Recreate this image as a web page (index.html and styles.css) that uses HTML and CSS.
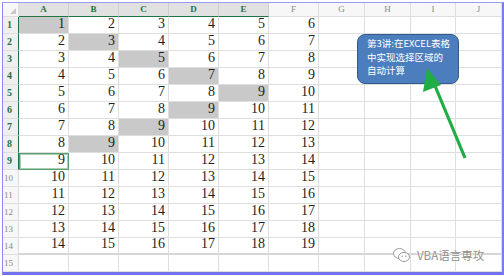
FILE: index.html
```html
<!DOCTYPE html>
<html lang="zh-CN">
<head>
    <meta charset="UTF-8">
    <title>EXCEL 选择区域</title>
    <link rel="stylesheet" href="styles.css">
</head>
<body>

<div class="sheet">
    <div class="grid" id="grid"></div>

    <div class="callout">第3讲:在EXCEL表格<br>中实现选择区域的<br>自动计算</div>

    <svg class="arrow" width="499" height="270" viewBox="0 0 499 270">
        <line x1="430" y1="78" x2="462" y2="155" stroke="#21ad45" stroke-width="3.2"/>
        <polygon points="424,65 438,82 420,89" fill="#21ad45"/>
    </svg>

    <div class="watermark">
        <svg class="wx" width="20" height="16" viewBox="0 0 20 16">
            <ellipse cx="7.5" cy="6.5" rx="6" ry="5" fill="#fff" stroke="#9a9a9a" stroke-width="1"/>
            <ellipse cx="12" cy="10" rx="5.5" ry="4.5" fill="#fff" stroke="#9a9a9a" stroke-width="1"/>
            <circle cx="10.2" cy="9.2" r="0.8" fill="#9a9a9a"/>
            <circle cx="13.8" cy="9.2" r="0.8" fill="#9a9a9a"/>
        </svg>
        <span>VBA语言専攻</span>
    </div>
</div>

<script>
    const cols = ['A', 'B', 'C', 'D', 'E', 'F', 'G', 'H', 'I', 'J'];
    // 灰色の選択セル (行, 列)
    const marked = ['1,0', '2,1', '3,2', '4,3', '5,4', '6,3', '7,2', '8,1'];
    const grid = document.getElementById('grid');

    function addCell(cls, text) {
        const cell = document.createElement('div');
        cell.className = cls;
        cell.textContent = text;
        grid.appendChild(cell);
    }

    addCell('corner', '');
    cols.forEach((c, i) => {
        addCell(i < 5 ? 'col-head sel' : 'col-head', c);
    });

    for (let r = 1; r <= 15; r++) {
        addCell(r <= 9 ? 'row-head sel' : 'row-head', r);
        for (let c = 0; c < 10; c++) {
            let cls = 'cell';
            let text = '';
            if (r <= 14 && c < 6) text = r + c;
            if (marked.includes(r + ',' + c)) cls += ' marked';
            if (r === 9 && c === 0) cls += ' active';
            if (r === 14) cls += ' last';
            addCell(cls, text);
        }
    }
</script>

</body>
</html>
```

FILE: styles.css
```css
body {
    margin: 0;
    background: #fff;
    font-family: 'Liberation Serif', serif;
}
.sheet {
    position: relative;
    width: 499px;
    margin: 2px 0 0 2px;
    border-left: 1px solid #8a8af0;
    border-top: 1px solid #9a9af2;
    border-right: 2px solid #7c7cee;
    border-bottom: 3px solid #7272ec;
    background: #fff;
}
.grid {
    display: grid;
    grid-template-columns: 16px 50px 50px 50px 50px 50px 50px 46px 46px 45px 46px;
    grid-template-rows: 14px repeat(15, 17px);
}
.grid > div {
    box-sizing: border-box;
    border-right: 1px solid #dedede;
    border-bottom: 1px solid #dedede;
}
.corner {
    position: relative;
    background: #f7f7f7;
}
.corner::after {
    content: '';
    position: absolute;
    right: 2px;
    bottom: 2px;
    border-left: 6px solid transparent;
    border-bottom: 6px solid #c8c8c8;
}
.col-head {
    background: #f7f7f7;
    color: #8a8a8a;
    font-size: 9px;
    line-height: 13px;
    text-align: center;
}
.col-head.sel {
    background: #e1e1e1;
    color: #1f7244;
    font-weight: bold;
    border-right-color: #cfcfcf;
}
.grid > .col-head.sel {
    border-bottom: 1px solid #217346;
}
.row-head {
    background: #f7f7f7;
    color: #8a8a8a;
    font-size: 9px;
    line-height: 16px;
    padding-left: 1px;
}
.row-head.sel {
    background: #efefef;
    color: #1f7244;
    font-weight: bold;
    font-size: 10px;
    padding-left: 4px;
}
.grid > .row-head.sel {
    border-right: 1px solid #217346;
}
.cell {
    display: flex;
    justify-content: flex-end;
    align-items: flex-end;
    padding: 0 3px 2px 0;
    font-size: 14px;
    line-height: 14px;
    color: #1e1e1e;
}
.cell.marked {
    background: #c9c9c9;
}
.grid > .cell.last {
    border-bottom: 2px solid #d6d6d6;
}
.grid > .cell.active {
    border: 1px solid #5d9d73;
    box-shadow: inset 0 0 0 1px #a9cfb5;
}
.callout {
    position: absolute;
    left: 354px;
    top: 31px;
    width: 102px;
    height: 50px;
    box-sizing: border-box;
    padding: 2px 4px 0 9px;
    border: 1px solid #35598a;
    border-radius: 8px;
    background: #4c7ebd;
    color: #fff;
    font-family: 'Noto Sans CJK SC', sans-serif;
    font-size: 9.5px;
    line-height: 13.5px;
}
.arrow {
    position: absolute;
    left: 0;
    top: 0;
}
.watermark {
    position: absolute;
    left: 389px;
    top: 244px;
    display: flex;
    align-items: center;
    gap: 5px;
    color: #8e8e8e;
    font-family: 'Noto Sans CJK SC', sans-serif;
    font-size: 11.5px;
    text-shadow: 0 0 2px #fff, 0 0 1px #fff;
}
```
